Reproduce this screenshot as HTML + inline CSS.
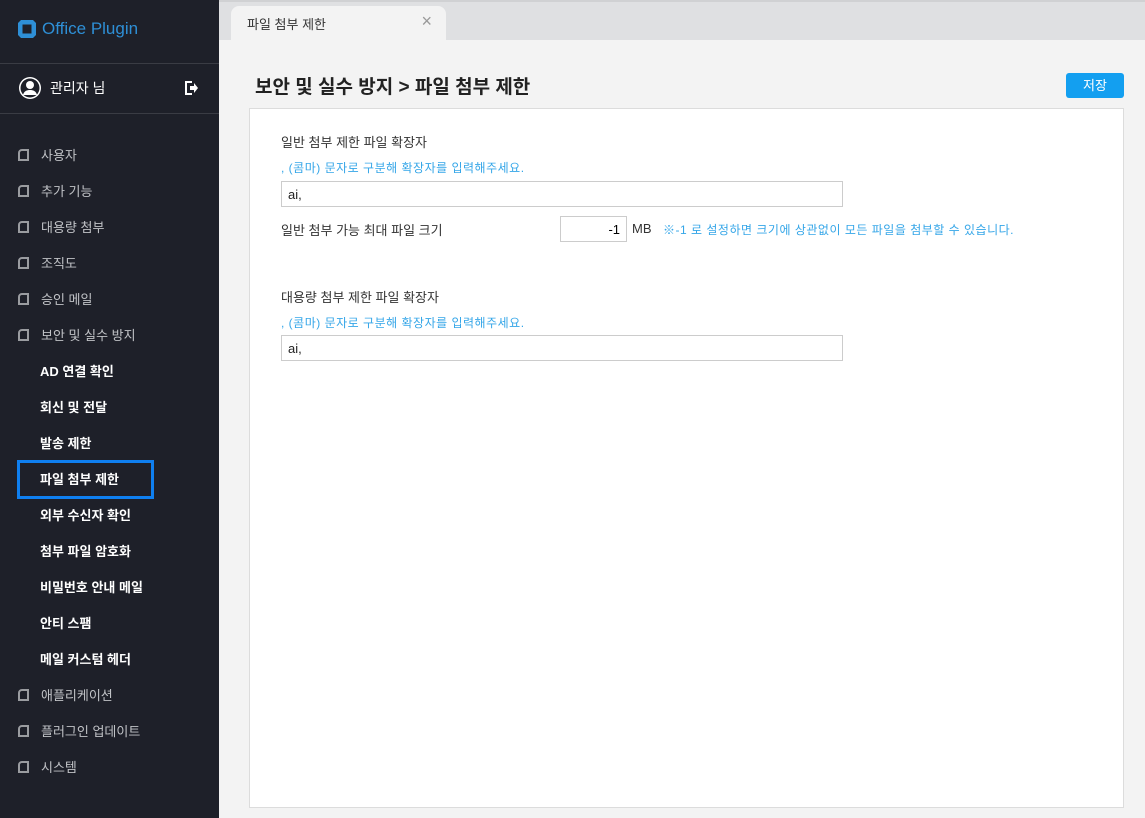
<!DOCTYPE html>
<html><head><meta charset="utf-8"><style>
*{margin:0;padding:0;box-sizing:border-box}
body{width:1145px;height:818px;overflow:hidden;font-family:"Liberation Sans","Noto Sans CJK KR",sans-serif;background:#f3f3f3;position:relative}
#sb{position:absolute;left:0;top:0;width:219px;height:818px;background:#1e2029;color:#c8c9cc}
.logo{position:absolute;left:18px;top:19px;font-size:17px;color:#2e8fd6;display:flex;align-items:center;gap:6px}
.hr{position:absolute;left:0;width:219px;height:1px;background:#3a3c44}
.user{position:absolute;left:18px;top:76px;display:flex;align-items:center;gap:8px;color:#fff;font-size:14px}
.it{position:absolute;left:18px;font-size:13px;display:flex;align-items:center;gap:12px;color:#c0c2c6}
.ic{width:11px;height:12px;border:2px solid #9a9ca0;border-top-left-radius:4px}
.sub{position:absolute;left:40px;font-size:13px;font-weight:bold;color:#fff}
#top{position:absolute;left:219px;top:0;right:0;height:40px;background:#dfe0e2;border-top:2px solid #d0d1d3}
.tab{position:absolute;left:12px;top:4px;width:215px;height:36px;background:#f3f3f3;border-radius:8px 8px 0 0;font-size:13px;color:#333;padding:8px 16px}
.tab span{position:absolute;right:14px;top:5px;color:#999;font-size:18px}
h1{position:absolute;left:255px;top:72px;font-size:19px;color:#222}
.btn{position:absolute;left:1066px;top:73px;width:58px;height:25px;background:#139ff0;border-radius:3px;color:#fff;font-size:13px;text-align:center;line-height:25px}
#pn{position:absolute;left:249px;top:108px;width:875px;height:700px;background:#fff;border:1px solid #dcdcdc}
.lb{position:absolute;left:31px;font-size:13px;color:#333}
.hint{position:absolute;left:31px;font-size:12px;letter-spacing:.5px;color:#35a6e8}
.inp{position:absolute;left:31px;width:562px;height:26px;border:1px solid #ccc;font-size:13px;padding:5px 6px;color:#222}
</style></head><body>
<div id="sb">
<div class="logo"><svg width="18" height="18" viewBox="0 0 18 18"><path d="M3 0h12l3 3v12l-3 3H3l-3-3V3z" fill="#2e8fd6"/><rect x="4.5" y="4.5" width="9" height="9" fill="#1e2029"/></svg>Office Plugin</div>
<div class="hr" style="top:63px"></div>
<div class="user"><svg width="24" height="24" viewBox="0 0 24 24"><circle cx="12" cy="12" r="11" fill="#fff"/><circle cx="12" cy="12" r="9.5" fill="#1e2029"/><circle cx="12" cy="9" r="4" fill="#fff"/><path d="M5 19c1-4 4-5 7-5s6 1 7 5" fill="#fff"/></svg>관리자 님</div>
<svg style="position:absolute;left:184px;top:81px" width="15" height="14" viewBox="0 0 15 14"><path d="M8 1H2v12h6" stroke="#fff" stroke-width="2" fill="none"/><path d="M6 5h4V2l4 5-4 5V9H6z" fill="#fff"/></svg>
<div class="hr" style="top:113px"></div>
<div class="it" style="top:145px"><i class="ic"></i>사용자</div>
<div class="it" style="top:181px"><i class="ic"></i>추가 기능</div>
<div class="it" style="top:217px"><i class="ic"></i>대용량 첨부</div>
<div class="it" style="top:253px"><i class="ic"></i>조직도</div>
<div class="it" style="top:289px"><i class="ic"></i>승인 메일</div>
<div class="it" style="top:325px"><i class="ic"></i>보안 및 실수 방지</div>
<div class="sub" style="top:361px">AD 연결 확인</div>
<div class="sub" style="top:397px">회신 및 전달</div>
<div class="sub" style="top:433px">발송 제한</div>
<div style="position:absolute;left:17px;top:460px;width:137px;height:39px;border:3px solid #0f7ff0"></div>
<div class="sub" style="top:469px">파일 첨부 제한</div>
<div class="sub" style="top:505px">외부 수신자 확인</div>
<div class="sub" style="top:541px">첨부 파일 암호화</div>
<div class="sub" style="top:577px">비밀번호 안내 메일</div>
<div class="sub" style="top:613px">안티 스팸</div>
<div class="sub" style="top:649px">메일 커스텀 헤더</div>
<div class="it" style="top:685px"><i class="ic"></i>애플리케이션</div>
<div class="it" style="top:721px"><i class="ic"></i>플러그인 업데이트</div>
<div class="it" style="top:757px"><i class="ic"></i>시스템</div>
</div>
<div id="top"><div class="tab">파일 첨부 제한<span>×</span></div></div>
<h1>보안 및 실수 방지 &gt; 파일 첨부 제한</h1>
<div class="btn">저장</div>
<div id="pn">
<div class="lb" style="top:23px">일반 첨부 제한 파일 확장자</div>
<div class="hint" style="top:50px">, (콤마) 문자로 구분해 확장자를 입력해주세요.</div>
<div class="inp" style="top:72px">ai,</div>
<div class="lb" style="top:111px">일반 첨부 가능 최대 파일 크기</div>
<div style="position:absolute;left:310px;top:107px;width:67px;height:26px;border:1px solid #ccc;font-size:13px;text-align:right;padding:5px 6px">-1</div>
<div class="lb" style="left:382px;top:112px">MB</div>
<div class="hint" style="left:413px;top:112px">※-1 로 설정하면 크기에 상관없이 모든 파일을 첨부할 수 있습니다.</div>
<div class="lb" style="top:178px">대용량 첨부 제한 파일 확장자</div>
<div class="hint" style="top:205px">, (콤마) 문자로 구분해 확장자를 입력해주세요.</div>
<div class="inp" style="top:226px">ai,</div>
</div>
</body></html>
